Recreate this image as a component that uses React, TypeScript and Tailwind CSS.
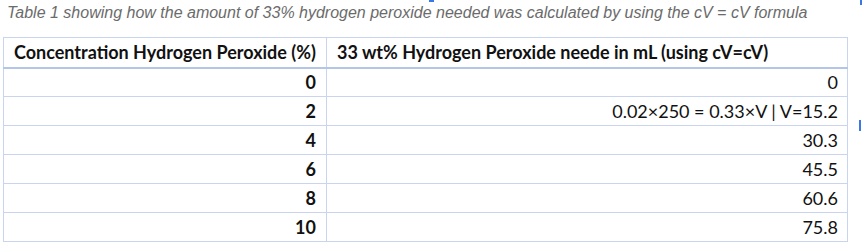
const rows = [
  { c: '0', v: '0' },
  { c: '2', v: '0.02×250 = 0.33×V | V=15.2' },
  { c: '4', v: '30.3' },
  { c: '6', v: '45.5' },
  { c: '8', v: '60.6' },
  { c: '10', v: '75.8' },
]

export default function App() {
  return (
    <div className="relative flex h-[248px] w-[862px] flex-col gap-[14px] overflow-hidden bg-white pt-[3px]">
      {/* selection handles */}
      <div className="absolute left-[429px] top-0 h-[2px] w-[5px] bg-[#3b78e7]" />
      <div className="absolute left-[860px] top-0 h-[5px] w-[2px] bg-[#3b78e7]" />
      <div className="absolute left-[859px] top-[120px] h-[11px] w-[2px] bg-[#3b78e7]" />

      <p
        className="pl-[7px] text-[16px] leading-[20px] italic text-[#6b6b6b]"
        style={{ fontFamily: "'Liberation Sans', Arial, sans-serif" }}
      >
        Table 1 showing how the amount of 33% hydrogen peroxide needed was calculated by using the cV = cV formula
      </p>

      <div className="pl-[3px]">
        <table
          className="w-[845px] border-collapse text-[18px] leading-[22px] text-[#111]"
          style={{ fontFamily: "Lato, 'Open Sans', sans-serif" }}
        >
          <thead>
            <tr className="h-[30px] border-b-2 border-[#b4c6e7]">
              <th className="w-[323px] border border-[#c9d5ee] pl-[10px] text-left font-bold">
                Concentration Hydrogen Peroxide (%)
              </th>
              <th className="border border-[#c9d5ee] pl-[10px] text-left font-bold">
                33 wt% Hydrogen Peroxide neede in mL (using cV=cV)
              </th>
            </tr>
          </thead>
          <tbody>
            {rows.map(r => (
              <tr key={r.c} className="h-[29px]">
                <td className="border border-[#c9d5ee] pr-[10px] text-right font-bold">{r.c}</td>
                <td className="border border-[#c9d5ee] pr-[9px] text-right">{r.v}</td>
              </tr>
            ))}
          </tbody>
        </table>
      </div>
    </div>
  )
}
